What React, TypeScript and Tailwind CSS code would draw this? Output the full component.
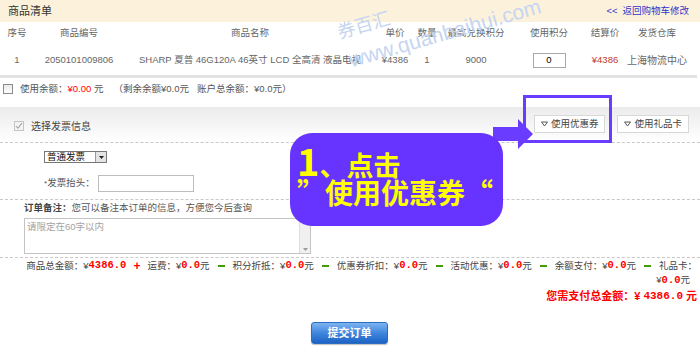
import React from "react";

// columns of the goods table: width and header text
interface Col {
  w: number;
  head: string;
}

const cols: Col[] = [
  { w: 34, head: "序号" },
  { w: 90, head: "商品编号" },
  { w: 252, head: "商品名称" },
  { w: 38, head: "单价" },
  { w: 26, head: "数量" },
  { w: 72, head: "最高兑换积分" },
  { w: 74, head: "使用积分" },
  { w: 38, head: "结算价" },
  { w: 66, head: "发货仓库" },
];

function Cell({ w, children }: { w: number; children: React.ReactNode }) {
  return (
    <div className="flex justify-center whitespace-nowrap" style={{ width: w }}>
      {children}
    </div>
  );
}

function CheckBox({ checked }: { checked?: boolean }) {
  return (
    <span
      className={`inline-flex items-center justify-center w-[10px] h-[10px] border ${
        checked ? "border-[#c4c4c4] bg-[#f4f4f4]" : "border-[#8a8a8a] bg-gradient-to-b from-[#e9e9e9] to-white"
      }`}
    >
      {checked && (
        <svg width="8" height="8" viewBox="0 0 8 8">
          <path d="M1 4.2 L3 6.2 L7 1.2" stroke="#a8a8a8" strokeWidth="1.1" fill="none" />
        </svg>
      )}
    </span>
  );
}

function Val({ v }: { v: string }) {
  return <span className="font-['Liberation_Mono',monospace] font-bold text-[10.5px] text-[#ff0000]">{v}</span>;
}

function Minus() {
  return <span className="inline-block w-[7px] h-[2px] bg-[#3f9e00] align-middle mx-[8px]" />;
}

function CouponButton({ label }: { label: string }) {
  return (
    <div className="flex items-center gap-[3px] h-[18px] px-[6px] border border-[#d8d8d8] bg-white text-[9.5px] text-[#444]">
      <svg width="7" height="6" viewBox="0 0 7 6">
        <path d="M0.5 1 L6.5 1 L3.5 5 Z" fill="#fff" stroke="#555" strokeWidth="1" />
      </svg>
      {label}
    </div>
  );
}

export default function App() {
  return (
    <div className="relative w-[700px] h-[350px] overflow-hidden bg-white text-[9.5px] text-[#555] font-['Liberation_Sans','Noto_Sans_CJK_SC',sans-serif]">
      {/* header */}
      <div className="h-[22px] bg-[#fcf2dc] flex items-center justify-between pl-[8px] pr-[11px]">
        <span className="text-[11px] text-[#333]">商品清单</span>
        <span className="text-[9.5px] text-[#3333cc]">
          <span className="mr-[5px]">&lt;&lt;</span>返回购物车修改
        </span>
      </div>

      {/* goods table */}
      <div className="h-[23px] flex items-center text-[#666]">
        {cols.map((c) => (
          <Cell key={c.head} w={c.w}>
            {c.head}
          </Cell>
        ))}
      </div>
      <div className="h-[30px] flex items-center text-[#666]">
        <Cell w={34}>1</Cell>
        <Cell w={90}>2050101009806</Cell>
        <Cell w={252}>SHARP 夏普 46G120A 46英寸 LCD 全高清 液晶电视</Cell>
        <Cell w={38}>¥4386</Cell>
        <Cell w={26}>1</Cell>
        <Cell w={72}>9000</Cell>
        <Cell w={74}>
          <div className="w-[33px] h-[15px] border border-[#a9a9a9] flex items-center justify-center text-[#000]">0</div>
        </Cell>
        <Cell w={38}>
          <span className="text-[#c0392b]">¥4386</span>
        </Cell>
        <Cell w={66}>
          <span className="text-[10px]">上海物流中心</span>
        </Cell>
      </div>
      <div className="h-[3px] w-[697px] bg-[#e3e3e3]" />

      {/* balance */}
      <div className="h-[22px] flex items-center pl-[3px] gap-[7px]">
        <CheckBox />
        <span>
          使用余额：<span className="text-[#ff0000]">¥0.00</span> 元
          <span className="ml-[10px]">（剩余余额¥0.0元</span>
          <span className="ml-[8px]">账户总余额：¥0.0元）</span>
        </span>
      </div>

      {/* invoice / coupon band */}
      <div className="mt-[7px] h-[35px] bg-gradient-to-b from-[#ebebeb] to-white flex justify-between">
        <div className="flex items-center gap-[7px] pl-[14px] h-[22px] mt-[8px] self-start">
          <CheckBox checked />
          <span className="text-[10px] text-[#444]">选择发票信息</span>
        </div>
        <div className="flex gap-[12px] pt-[8px] pr-[11px]">
          <CouponButton label="使用优惠券" />
          <CouponButton label="使用礼品卡" />
        </div>
      </div>
      <div className="border-t border-dashed border-[#c8c8c8]" />

      {/* invoice details */}
      <div className="pl-[44px]">
        <div className="mt-[8px] flex">
          <div className="flex items-center h-[12px] w-[63px] border border-[#777] bg-white">
            <span className="flex-1 pl-[2px] text-[9.5px] text-[#111] leading-none">普通发票</span>
            <span className="w-[11px] h-full border-l border-[#999] bg-[#e4e4e4] flex items-center justify-center">
              <svg width="5" height="3" viewBox="0 0 5 3">
                <path d="M0 0 L5 0 L2.5 3 Z" fill="#222" />
              </svg>
            </span>
          </div>
        </div>
        <div className="mt-[12px] flex items-center">
          <span className="w-[54px] text-[#555]">
            <span className="text-[8px]">*</span>发票抬头：
          </span>
          <div className="w-[96px] h-[17px] border border-[#bdbdbd]" />
        </div>
      </div>
      <div className="mt-[7px] border-t border-dashed border-[#c8c8c8]" />

      {/* remark */}
      <div className="pl-[24px]">
        <div className="h-[17px] flex items-center">
          <span className="font-bold text-[#444]">订单备注：</span>
          <span className="text-[#555]">您可以备注本订单的信息，方便您今后查询</span>
        </div>
        <div className="mt-[1px] w-[287px] h-[36px] border border-[#c3c3c3] flex">
          <span className="flex-1 pl-[2px] pt-[1px] text-[#a3a3a3]">请限定在60字以内</span>
          <div className="w-[11px] h-full bg-[#f0f0f0] border-l border-[#ddd] flex flex-col justify-between items-center py-[2px]">
            <svg width="5" height="3" viewBox="0 0 5 3">
              <path d="M0 3 L5 3 L2.5 0 Z" fill="#999" />
            </svg>
            <svg width="5" height="3" viewBox="0 0 5 3">
              <path d="M0 0 L5 0 L2.5 3 Z" fill="#999" />
            </svg>
          </div>
        </div>
      </div>
      <div className="mt-[3px] border-t border-dashed border-[#c8c8c8]" />

      {/* totals */}
      <div className="pr-[3px] text-[#444]">
        <div className="h-[16px] flex items-center justify-end whitespace-nowrap">
          商品总金额：¥<Val v="4386.0" />
          <span className="mx-[7px] font-bold text-[12px] text-[#ff0000]">+</span>
          运费：¥<Val v="0.0" />元<Minus />
          积分折抵：¥<Val v="0.0" />元<Minus />
          优惠券折扣：¥<Val v="0.0" />元<Minus />
          活动优惠：¥<Val v="0.0" />元<Minus />
          余额支付：¥<Val v="0.0" />元<Minus />
          礼品卡：
        </div>
        <div className="h-[13px] flex items-center justify-end pr-[7px]">
          ¥<Val v="0.0" />元
        </div>
        <div className="h-[18px] flex items-center justify-end text-[11px] font-bold text-[#ff0000]">
          您需支付总金额：¥ <span className="font-['Liberation_Mono',monospace] mx-[3px]">4386.0</span>元
        </div>
      </div>

      {/* submit */}
      <div className="mt-[17px] flex justify-center pr-[1px]">
        <button className="w-[77px] h-[22px] rounded-[3px] border border-[#2d6cc0] bg-gradient-to-b from-[#7db3f0] via-[#3f86de] to-[#1d62c4] text-white text-[11px] font-bold shadow-[0_1px_1px_rgba(0,0,0,0.25)]">
          提交订单
        </button>
      </div>

      {/* watermark */}
      <div className="absolute left-[364px] top-[26px] -translate-x-1/2 -translate-y-1/2 rotate-[-16deg] text-[18px] text-[#c6d5f1] whitespace-nowrap pointer-events-none">
        券百汇
      </div>
      <div className="absolute left-[445px] top-[33px] -translate-x-1/2 -translate-y-1/2 rotate-[-16deg] text-[21px] text-[#c6d5f1] whitespace-nowrap pointer-events-none">
        www.quanbaihui.com
      </div>

      {/* highlight box and arrow */}
      <div className="absolute left-[523px] top-[95px] w-[89px] h-[48px] border-[3px] border-[#6a3cff]" />
      <svg className="absolute left-[490px] top-[117px]" width="46" height="34" viewBox="0 0 46 34">
        <path d="M3 10 L28 10 L28 2 L43 17 L28 32 L28 24 L3 24 Z" fill="#6a3cff" />
      </svg>

      {/* callout bubble */}
      <div className="absolute left-[290px] top-[133px] w-[213px] h-[93px] rounded-[22px] bg-[#6633ff] text-[#ffff00] font-['Noto_Sans_CJK_SC',sans-serif] font-bold pl-[7px] pt-[10px]">
        <div className="flex items-end h-[36px] leading-none">
          <span className="text-[38px] leading-none">1</span>
          <span className="text-[27px] leading-none mb-[1px]">、点击</span>
        </div>
        <div className="text-[28px] leading-none -mt-[1px] whitespace-nowrap">”使用优惠券“</div>
      </div>
    </div>
  );
}
